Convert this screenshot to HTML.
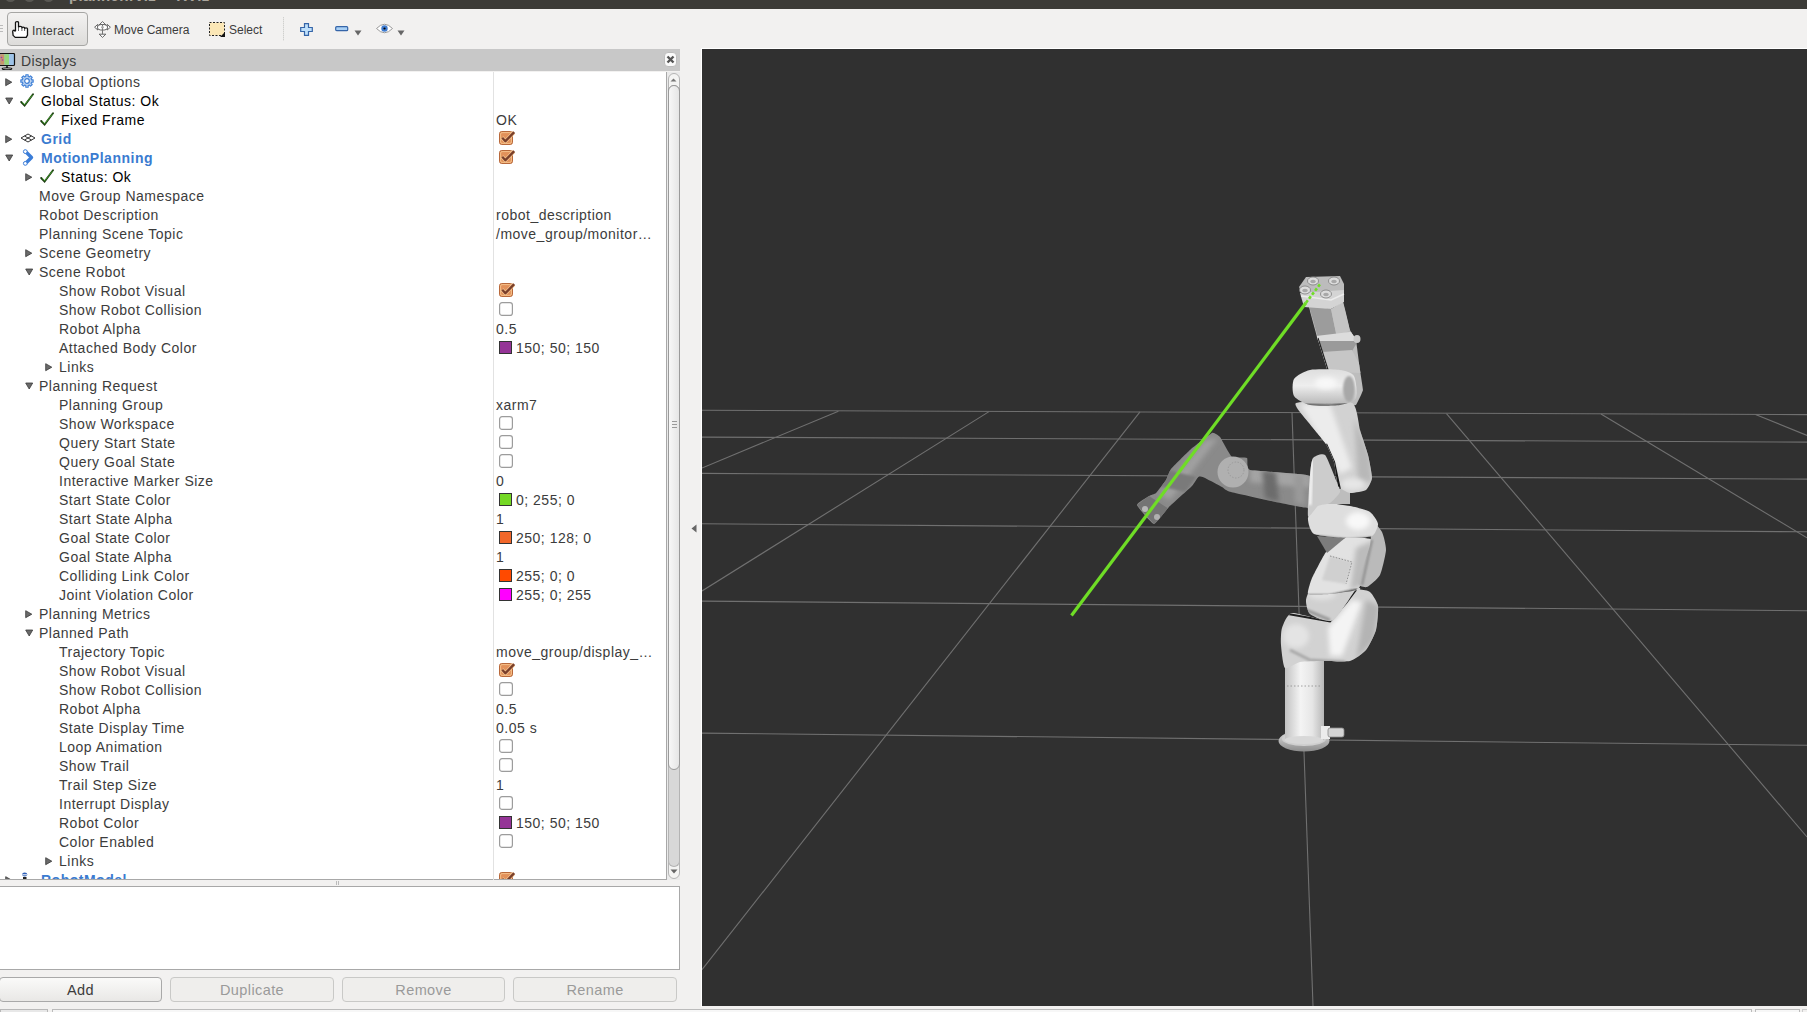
<!DOCTYPE html>
<html><head><meta charset="utf-8"><style>
*{margin:0;padding:0;box-sizing:border-box}
html,body{width:1807px;height:1012px;overflow:hidden;background:#f2f1f0;font-family:"Liberation Sans",sans-serif;position:relative}
.abs{position:absolute}
#title{position:absolute;left:0;top:0;width:1807px;height:9px;background:#3c3b37;overflow:hidden}
#toolbar{position:absolute;left:0;top:9px;width:1807px;height:40px;background:#f2f1f0}
.tb{position:absolute;font-size:12px;color:#3c3c3c;line-height:14px;white-space:nowrap}
#hdr{position:absolute;left:0;top:49px;width:680px;height:22px;background:#c8c8c8}
#tree{position:absolute;left:0;top:72px;width:666px;height:808px;background:#fff;overflow:hidden;border-bottom:1px solid #a8a8a8}
.t{position:absolute;font-size:14px;letter-spacing:0.5px;line-height:19px;height:19px;color:#3c3c3c;white-space:nowrap;padding-top:1px}
.k{color:#000}
.b{color:#3a7bd0;font-weight:bold}
.ar,.ic,.cb{position:absolute}
.sw{position:absolute;width:13px;height:13px;border:1px solid #333}
.vp{position:absolute;left:702px;top:49px}
.btn{position:absolute;top:977px;height:25px;border:1px solid #a9a9a9;border-radius:4px;background:linear-gradient(#fafaf9,#e9e8e6);font-size:14.5px;letter-spacing:0.4px;text-align:center;line-height:24px;color:#3c3c3c}
.btn.dis{color:#9a9a9a;border-color:#c9c9c7;background:#efeeec}
</style></head>
<body>
<div id="title">
 <div class="abs" style="left:5px;top:-9px;width:11px;height:11px;border-radius:50%;background:#5a5954"></div>
 <div class="abs" style="left:24px;top:-9px;width:11px;height:11px;border-radius:50%;background:#5a5954"></div>
 <div class="abs" style="left:43px;top:-9px;width:11px;height:11px;border-radius:50%;background:#5a5954"></div>
 <div class="abs" style="left:69px;top:-12px;font-size:15px;line-height:16px;color:#aaa69d;font-weight:bold;letter-spacing:0.3px">planner.rviz* - RViz</div>
</div>

<div id="toolbar">
 <div class="abs" style="left:0;top:16px;width:3px;height:1px;background:#bbb"></div>
 <div class="abs" style="left:0;top:19px;width:3px;height:1px;background:#bbb"></div>
 <div class="abs" style="left:0;top:22px;width:3px;height:1px;background:#bbb"></div>
 <div class="abs" style="left:7px;top:3px;width:81px;height:34px;border:1px solid #a6a6a4;border-radius:4px;background:linear-gradient(#f3f2f1,#dddcda)"></div>
 <svg class="abs" style="left:12px;top:12px" width="18" height="19"><path d="M3.5 10 V1.6 Q3.5 0.7 5 0.7 Q6.5 0.7 6.5 1.6 V6.2 Q6.5 5.4 8.2 5.4 Q9.9 5.4 9.9 6.3 V7 Q9.9 6.1 11.2 6.1 Q12.6 6.1 12.6 7 V7.7 Q12.6 6.8 14 6.8 Q15.5 6.8 15.5 7.8 V14.2 L14.2 16.4 H3.2 L1.1 14.4 L0.7 10.6 Q0.7 9.2 2.1 9.2 L3.5 10.4" fill="#fff" stroke="#111" stroke-width="1.3" stroke-linejoin="round"/><path d="M6.5 6.5 V10 M9.9 7 V10 M12.6 7.7 V10" stroke="#555" stroke-width="0.9"/></svg>
 <div class="tb" style="left:32px;top:15px;letter-spacing:0.25px">Interact</div>
 <svg class="abs" style="left:94px;top:12px" width="17" height="17"><path d="M8.5 0.6 L5.2 3.8 H11.8Z M8.5 16.4 L5.2 13.2 H11.8Z M0.6 6.2 L3.8 3.4 V9 Z M16.4 6.2 L13.2 3.4 V9Z" fill="#fff" stroke="#555" stroke-width="0.9"/><ellipse cx="8.5" cy="6.3" rx="5" ry="2.8" fill="#fff" stroke="#555" stroke-width="0.9"/><path d="M8.5 3.8 V13.2" stroke="#777" stroke-width="1"/><circle cx="8.5" cy="6.3" r="1.3" fill="#aaa"/></svg>
 <div class="tb" style="left:114px;top:14px">Move Camera</div>
 <svg class="abs" style="left:209px;top:12.5px" width="17" height="15"><rect x="0.5" y="0.5" width="15" height="13" fill="#fbe7b6" stroke="#222" stroke-width="1" stroke-dasharray="2 1.5"/><path d="M16 10 L16 15 L11 15Z" fill="#111"/></svg>
 <div class="tb" style="left:229px;top:14px">Select</div>
 <div class="abs" style="left:283px;top:8px;width:1px;height:24px;background:repeating-linear-gradient(#d0d0ce 0 1px,#e4e4e2 1px 2px)"></div>
 <svg class="abs" style="left:300px;top:14px" width="14" height="14"><path d="M4.5 0.7 H8.5 V4.5 H12.3 V8.5 H8.5 V12.3 H4.5 V8.5 H0.7 V4.5 H4.5Z" fill="#bfe0fb" stroke="#3565a8" stroke-width="1.2"/></svg>
 <svg class="abs" style="left:335px;top:17px" width="14" height="6"><rect x="0.7" y="0.7" width="12" height="4" rx="1" fill="#a9d0f5" stroke="#3565a8" stroke-width="1.2"/></svg>
 <svg class="abs" style="left:354px;top:21px" width="9" height="6"><path d="M0.5 0.5 H7.5 L4 5.5Z" fill="#666"/></svg>
 <svg class="abs" style="left:376px;top:14px" width="17" height="11"><path d="M0.5 5.5 Q8.5 -3 16.5 5.5 Q8.5 14 0.5 5.5Z" fill="#fff" stroke="#999" stroke-width="1"/><circle cx="8.5" cy="5.5" r="3.2" fill="#3f7cd0"/><circle cx="8.5" cy="5.5" r="1.1" fill="#000"/></svg>
 <svg class="abs" style="left:397px;top:21px" width="9" height="6"><path d="M0.5 0.5 H7.5 L4 5.5Z" fill="#666"/></svg>
</div>


<div id="hdr">
 <svg class="abs" style="left:0;top:4px" width="17" height="17"><rect x="-0.5" y="0.5" width="15" height="12" rx="1" fill="#9ec3e8" stroke="#111" stroke-width="1.2"/><rect x="0.2" y="1.2" width="4.3" height="10.6" fill="#c8956a"/><rect x="4.5" y="1.2" width="4.5" height="10.6" fill="#96d67a"/><circle cx="1.5" cy="4.5" r="0.8" fill="#a030c0"/><circle cx="2.5" cy="7" r="0.8" fill="#a030c0"/><path d="M7 13 V15" stroke="#111" stroke-width="1.5"/><ellipse cx="7" cy="15.8" rx="4.8" ry="1" fill="none" stroke="#111" stroke-width="1.1"/></svg>
 <div class="abs" style="left:21px;top:3px;font-size:14px;letter-spacing:0.35px;line-height:18px;color:#3c3c3c">Displays</div>
 <div class="abs" style="left:664px;top:3px;width:13px;height:15px;background:#fafafa;border:1px solid #bdbdbd;border-radius:4px"></div>
 <svg class="abs" style="left:665px;top:5px" width="11" height="11"><path d="M2.5 2.5 L8.5 8.5 M8.5 2.5 L2.5 8.5" stroke="#555" stroke-width="2.4"/></svg>
</div>

<div id="tree">
<div style="position:absolute;left:0;top:-72px;width:666px;height:900px">
<svg class="ar" style="left:5px;top:78px" width="8" height="9"><path d="M0.7 0.7 L6.8 4.2 L0.7 7.7Z" fill="#6a6a6a" stroke="#3a3a3a" stroke-width="0.8" stroke-linejoin="round"/></svg>
<svg class="ic" style="left:20px;top:74px" width="14" height="14"><path d="M11.56 5.86 L13.18 5.80 L13.18 8.20 L11.56 8.14 L11.03 9.42 L12.22 10.52 L10.52 12.22 L9.42 11.03 L8.14 11.56 L8.20 13.18 L5.80 13.18 L5.86 11.56 L4.58 11.03 L3.48 12.22 L1.78 10.52 L2.97 9.42 L2.44 8.14 L0.82 8.20 L0.82 5.80 L2.44 5.86 L2.97 4.58 L1.78 3.48 L3.48 1.78 L4.58 2.97 L5.86 2.44 L5.80 0.82 L8.20 0.82 L8.14 2.44 L9.42 2.97 L10.52 1.78 L12.22 3.48 L11.03 4.58Z" fill="#bcd3f0" stroke="#3d7fd6" stroke-width="1.1" stroke-linejoin="round"/><circle cx="7" cy="7" r="2.3" fill="#fff" stroke="#3d7fd6" stroke-width="1.2"/></svg>
<div class="t" style="left:41px;top:72px">Global Options</div>
<svg class="ar" style="left:5px;top:97px" width="9" height="8"><path d="M0.7 1 L7.7 1 L4.2 7Z" fill="#6a6a6a" stroke="#3a3a3a" stroke-width="0.8" stroke-linejoin="round"/></svg>
<svg class="ic" style="left:20px;top:93px" width="16" height="16"><path d="M1.2 9 L4.6 12.6 L13 1.2" stroke="#1d3a12" stroke-width="1.9" fill="none" stroke-linecap="round"/><path d="M2 9.2 L4.7 11.8 L12.6 1.8" stroke="#46b030" stroke-width="0.8" fill="none"/></svg>
<div class="t k" style="left:41px;top:91px">Global Status: Ok</div>
<svg class="ic" style="left:40px;top:112px" width="16" height="16"><path d="M1.2 9 L4.6 12.6 L13 1.2" stroke="#1d3a12" stroke-width="1.9" fill="none" stroke-linecap="round"/><path d="M2 9.2 L4.7 11.8 L12.6 1.8" stroke="#46b030" stroke-width="0.8" fill="none"/></svg>
<div class="t k" style="left:61px;top:110px">Fixed Frame</div>
<div class="t" style="left:496px;top:110px">OK</div>
<svg class="ar" style="left:5px;top:135px" width="8" height="9"><path d="M0.7 0.7 L6.8 4.2 L0.7 7.7Z" fill="#6a6a6a" stroke="#3a3a3a" stroke-width="0.8" stroke-linejoin="round"/></svg>
<svg class="ic" style="left:20px;top:133px" width="16" height="10"><path d="M1 5 L8 1 L15 5 L8 9Z M4.5 3 L11.5 7 M11.5 3 L4.5 7" stroke="#333" stroke-width="1" fill="none"/></svg>
<div class="t b" style="left:41px;top:129px">Grid</div>
<svg class="cb" style="left:499px;top:131px" width="17" height="15"><rect x="0.5" y="0.5" width="13" height="13" rx="2.2" fill="#e2915a" stroke="#b8683a" stroke-width="1"/><rect x="1.6" y="1.6" width="10.8" height="10.8" rx="1.5" fill="none" stroke="#f6c58e" stroke-width="0.9"/><path d="M3 6.6 L6.4 10.2 L14.8 1.4" stroke="#f7c893" stroke-width="3.8" fill="none" stroke-linejoin="round"/><path d="M3.2 6.8 L6.4 10.2 L15.2 1.2" stroke="#7a3f2a" stroke-width="2.4" fill="none" stroke-linejoin="round"/></svg>
<svg class="ar" style="left:5px;top:154px" width="9" height="8"><path d="M0.7 1 L7.7 1 L4.2 7Z" fill="#6a6a6a" stroke="#3a3a3a" stroke-width="0.8" stroke-linejoin="round"/></svg>
<svg class="ic" style="left:20px;top:149px" width="14" height="17"><path d="M5.5 2.5 L11.5 8.5 L5.5 14.5" stroke="#3b7dd8" stroke-width="3.4" fill="none" stroke-linejoin="round"/><circle cx="5.3" cy="2.6" r="1.9" fill="#fff" stroke="#3b7dd8" stroke-width="1"/><circle cx="5.3" cy="14.4" r="1.9" fill="#fff" stroke="#3b7dd8" stroke-width="1"/></svg>
<div class="t b" style="left:41px;top:148px">MotionPlanning</div>
<svg class="cb" style="left:499px;top:150px" width="17" height="15"><rect x="0.5" y="0.5" width="13" height="13" rx="2.2" fill="#e2915a" stroke="#b8683a" stroke-width="1"/><rect x="1.6" y="1.6" width="10.8" height="10.8" rx="1.5" fill="none" stroke="#f6c58e" stroke-width="0.9"/><path d="M3 6.6 L6.4 10.2 L14.8 1.4" stroke="#f7c893" stroke-width="3.8" fill="none" stroke-linejoin="round"/><path d="M3.2 6.8 L6.4 10.2 L15.2 1.2" stroke="#7a3f2a" stroke-width="2.4" fill="none" stroke-linejoin="round"/></svg>
<svg class="ar" style="left:25px;top:173px" width="8" height="9"><path d="M0.7 0.7 L6.8 4.2 L0.7 7.7Z" fill="#6a6a6a" stroke="#3a3a3a" stroke-width="0.8" stroke-linejoin="round"/></svg>
<svg class="ic" style="left:40px;top:169px" width="16" height="16"><path d="M1.2 9 L4.6 12.6 L13 1.2" stroke="#1d3a12" stroke-width="1.9" fill="none" stroke-linecap="round"/><path d="M2 9.2 L4.7 11.8 L12.6 1.8" stroke="#46b030" stroke-width="0.8" fill="none"/></svg>
<div class="t k" style="left:61px;top:167px">Status: Ok</div>
<div class="t" style="left:39px;top:186px">Move Group Namespace</div>
<div class="t" style="left:39px;top:205px">Robot Description</div>
<div class="t" style="left:496px;top:205px">robot_description</div>
<div class="t" style="left:39px;top:224px">Planning Scene Topic</div>
<div class="t" style="left:496px;top:224px">/move_group/monitor…</div>
<svg class="ar" style="left:25px;top:249px" width="8" height="9"><path d="M0.7 0.7 L6.8 4.2 L0.7 7.7Z" fill="#6a6a6a" stroke="#3a3a3a" stroke-width="0.8" stroke-linejoin="round"/></svg>
<div class="t" style="left:39px;top:243px">Scene Geometry</div>
<svg class="ar" style="left:25px;top:268px" width="9" height="8"><path d="M0.7 1 L7.7 1 L4.2 7Z" fill="#6a6a6a" stroke="#3a3a3a" stroke-width="0.8" stroke-linejoin="round"/></svg>
<div class="t" style="left:39px;top:262px">Scene Robot</div>
<div class="t" style="left:59px;top:281px">Show Robot Visual</div>
<svg class="cb" style="left:499px;top:283px" width="17" height="15"><rect x="0.5" y="0.5" width="13" height="13" rx="2.2" fill="#e2915a" stroke="#b8683a" stroke-width="1"/><rect x="1.6" y="1.6" width="10.8" height="10.8" rx="1.5" fill="none" stroke="#f6c58e" stroke-width="0.9"/><path d="M3 6.6 L6.4 10.2 L14.8 1.4" stroke="#f7c893" stroke-width="3.8" fill="none" stroke-linejoin="round"/><path d="M3.2 6.8 L6.4 10.2 L15.2 1.2" stroke="#7a3f2a" stroke-width="2.4" fill="none" stroke-linejoin="round"/></svg>
<div class="t" style="left:59px;top:300px">Show Robot Collision</div>
<svg class="cb" style="left:499px;top:302px" width="15" height="15"><rect x="0.6" y="0.6" width="12.8" height="12.8" rx="2.5" fill="#fff" stroke="#9c9c9c" stroke-width="1.2"/></svg>
<div class="t" style="left:59px;top:319px">Robot Alpha</div>
<div class="t" style="left:496px;top:319px">0.5</div>
<div class="t" style="left:59px;top:338px">Attached Body Color</div>
<div class="sw" style="left:499px;top:341px;background:#953497"></div>
<div class="t" style="left:516px;top:338px">150; 50; 150</div>
<svg class="ar" style="left:45px;top:363px" width="8" height="9"><path d="M0.7 0.7 L6.8 4.2 L0.7 7.7Z" fill="#6a6a6a" stroke="#3a3a3a" stroke-width="0.8" stroke-linejoin="round"/></svg>
<div class="t" style="left:59px;top:357px">Links</div>
<svg class="ar" style="left:25px;top:382px" width="9" height="8"><path d="M0.7 1 L7.7 1 L4.2 7Z" fill="#6a6a6a" stroke="#3a3a3a" stroke-width="0.8" stroke-linejoin="round"/></svg>
<div class="t" style="left:39px;top:376px">Planning Request</div>
<div class="t" style="left:59px;top:395px">Planning Group</div>
<div class="t" style="left:496px;top:395px">xarm7</div>
<div class="t" style="left:59px;top:414px">Show Workspace</div>
<svg class="cb" style="left:499px;top:416px" width="15" height="15"><rect x="0.6" y="0.6" width="12.8" height="12.8" rx="2.5" fill="#fff" stroke="#9c9c9c" stroke-width="1.2"/></svg>
<div class="t" style="left:59px;top:433px">Query Start State</div>
<svg class="cb" style="left:499px;top:435px" width="15" height="15"><rect x="0.6" y="0.6" width="12.8" height="12.8" rx="2.5" fill="#fff" stroke="#9c9c9c" stroke-width="1.2"/></svg>
<div class="t" style="left:59px;top:452px">Query Goal State</div>
<svg class="cb" style="left:499px;top:454px" width="15" height="15"><rect x="0.6" y="0.6" width="12.8" height="12.8" rx="2.5" fill="#fff" stroke="#9c9c9c" stroke-width="1.2"/></svg>
<div class="t" style="left:59px;top:471px">Interactive Marker Size</div>
<div class="t" style="left:496px;top:471px">0</div>
<div class="t" style="left:59px;top:490px">Start State Color</div>
<div class="sw" style="left:499px;top:493px;background:#74d824"></div>
<div class="t" style="left:516px;top:490px">0; 255; 0</div>
<div class="t" style="left:59px;top:509px">Start State Alpha</div>
<div class="t" style="left:496px;top:509px">1</div>
<div class="t" style="left:59px;top:528px">Goal State Color</div>
<div class="sw" style="left:499px;top:531px;background:#f2672a"></div>
<div class="t" style="left:516px;top:528px">250; 128; 0</div>
<div class="t" style="left:59px;top:547px">Goal State Alpha</div>
<div class="t" style="left:496px;top:547px">1</div>
<div class="t" style="left:59px;top:566px">Colliding Link Color</div>
<div class="sw" style="left:499px;top:569px;background:#ff4a00"></div>
<div class="t" style="left:516px;top:566px">255; 0; 0</div>
<div class="t" style="left:59px;top:585px">Joint Violation Color</div>
<div class="sw" style="left:499px;top:588px;background:#ff00ff"></div>
<div class="t" style="left:516px;top:585px">255; 0; 255</div>
<svg class="ar" style="left:25px;top:610px" width="8" height="9"><path d="M0.7 0.7 L6.8 4.2 L0.7 7.7Z" fill="#6a6a6a" stroke="#3a3a3a" stroke-width="0.8" stroke-linejoin="round"/></svg>
<div class="t" style="left:39px;top:604px">Planning Metrics</div>
<svg class="ar" style="left:25px;top:629px" width="9" height="8"><path d="M0.7 1 L7.7 1 L4.2 7Z" fill="#6a6a6a" stroke="#3a3a3a" stroke-width="0.8" stroke-linejoin="round"/></svg>
<div class="t" style="left:39px;top:623px">Planned Path</div>
<div class="t" style="left:59px;top:642px">Trajectory Topic</div>
<div class="t" style="left:496px;top:642px">move_group/display_…</div>
<div class="t" style="left:59px;top:661px">Show Robot Visual</div>
<svg class="cb" style="left:499px;top:663px" width="17" height="15"><rect x="0.5" y="0.5" width="13" height="13" rx="2.2" fill="#e2915a" stroke="#b8683a" stroke-width="1"/><rect x="1.6" y="1.6" width="10.8" height="10.8" rx="1.5" fill="none" stroke="#f6c58e" stroke-width="0.9"/><path d="M3 6.6 L6.4 10.2 L14.8 1.4" stroke="#f7c893" stroke-width="3.8" fill="none" stroke-linejoin="round"/><path d="M3.2 6.8 L6.4 10.2 L15.2 1.2" stroke="#7a3f2a" stroke-width="2.4" fill="none" stroke-linejoin="round"/></svg>
<div class="t" style="left:59px;top:680px">Show Robot Collision</div>
<svg class="cb" style="left:499px;top:682px" width="15" height="15"><rect x="0.6" y="0.6" width="12.8" height="12.8" rx="2.5" fill="#fff" stroke="#9c9c9c" stroke-width="1.2"/></svg>
<div class="t" style="left:59px;top:699px">Robot Alpha</div>
<div class="t" style="left:496px;top:699px">0.5</div>
<div class="t" style="left:59px;top:718px">State Display Time</div>
<div class="t" style="left:496px;top:718px">0.05 s</div>
<div class="t" style="left:59px;top:737px">Loop Animation</div>
<svg class="cb" style="left:499px;top:739px" width="15" height="15"><rect x="0.6" y="0.6" width="12.8" height="12.8" rx="2.5" fill="#fff" stroke="#9c9c9c" stroke-width="1.2"/></svg>
<div class="t" style="left:59px;top:756px">Show Trail</div>
<svg class="cb" style="left:499px;top:758px" width="15" height="15"><rect x="0.6" y="0.6" width="12.8" height="12.8" rx="2.5" fill="#fff" stroke="#9c9c9c" stroke-width="1.2"/></svg>
<div class="t" style="left:59px;top:775px">Trail Step Size</div>
<div class="t" style="left:496px;top:775px">1</div>
<div class="t" style="left:59px;top:794px">Interrupt Display</div>
<svg class="cb" style="left:499px;top:796px" width="15" height="15"><rect x="0.6" y="0.6" width="12.8" height="12.8" rx="2.5" fill="#fff" stroke="#9c9c9c" stroke-width="1.2"/></svg>
<div class="t" style="left:59px;top:813px">Robot Color</div>
<div class="sw" style="left:499px;top:816px;background:#953497"></div>
<div class="t" style="left:516px;top:813px">150; 50; 150</div>
<div class="t" style="left:59px;top:832px">Color Enabled</div>
<svg class="cb" style="left:499px;top:834px" width="15" height="15"><rect x="0.6" y="0.6" width="12.8" height="12.8" rx="2.5" fill="#fff" stroke="#9c9c9c" stroke-width="1.2"/></svg>
<svg class="ar" style="left:45px;top:857px" width="8" height="9"><path d="M0.7 0.7 L6.8 4.2 L0.7 7.7Z" fill="#6a6a6a" stroke="#3a3a3a" stroke-width="0.8" stroke-linejoin="round"/></svg>
<div class="t" style="left:59px;top:851px">Links</div>
<svg class="ar" style="left:5px;top:876px" width="8" height="9"><path d="M0.7 0.7 L6.8 4.2 L0.7 7.7Z" fill="#6a6a6a" stroke="#3a3a3a" stroke-width="0.8" stroke-linejoin="round"/></svg>
<svg class="ic" style="left:20px;top:871px" width="14" height="17"><ellipse cx="4.7" cy="3.6" rx="2.6" ry="2" fill="#2d5fb8"/><rect x="2.3" y="3.3" width="5" height="1" fill="#fff"/><rect x="3" y="6" width="3.5" height="3" fill="#222"/><rect x="2" y="9" width="5.5" height="6" fill="#fff" stroke="#333" stroke-width="0.8"/></svg>
<div class="t b" style="left:41px;top:870px">RobotModel</div>
<svg class="cb" style="left:499px;top:872px" width="17" height="15"><rect x="0.5" y="0.5" width="13" height="13" rx="2.2" fill="#e2915a" stroke="#b8683a" stroke-width="1"/><rect x="1.6" y="1.6" width="10.8" height="10.8" rx="1.5" fill="none" stroke="#f6c58e" stroke-width="0.9"/><path d="M3 6.6 L6.4 10.2 L14.8 1.4" stroke="#f7c893" stroke-width="3.8" fill="none" stroke-linejoin="round"/><path d="M3.2 6.8 L6.4 10.2 L15.2 1.2" stroke="#7a3f2a" stroke-width="2.4" fill="none" stroke-linejoin="round"/></svg>
</div>
</div>

<div class="abs" style="left:666px;top:72px;width:14px;height:808px;background:#eaeaea;border-left:1px solid #a8a8a8"></div>
<div class="abs" style="left:668px;top:73px;width:12px;height:806px;border:1px solid #b4b4b4;border-radius:6px;background:#f4f4f3"></div>
<div class="abs" style="left:668px;top:85px;width:12px;height:685px;border:1px solid #9b9b9b;border-radius:6px;background:linear-gradient(90deg,#f7f7f7,#e6e6e6)"></div>
<div class="abs" style="left:668px;top:760px;width:12px;height:107px;background:#d8d8d8;border:1px solid #b4b4b4;border-top:none;border-radius:0 0 6px 6px"></div>
<div class="abs" style="left:668px;top:85px;width:12px;height:685px;border:1px solid #9b9b9b;border-radius:6px;background:linear-gradient(90deg,#f7f7f7,#e6e6e6)"></div>
<div class="abs" style="left:672px;top:421px;width:5px;height:1px;background:#9a9a9a"></div><div class="abs" style="left:672px;top:424px;width:5px;height:1px;background:#9a9a9a"></div><div class="abs" style="left:672px;top:427px;width:5px;height:1px;background:#9a9a9a"></div>
<svg class="abs" style="left:670px;top:78px" width="7" height="4"><path d="M0.5 3.5 L3.5 0.5 L6.5 3.5Z" fill="#777"/></svg>
<svg class="abs" style="left:670px;top:869px" width="8" height="5"><path d="M0.5 0.5 L7.5 0.5 L4 4.5Z" fill="#666"/></svg>
<div class="abs" style="left:493px;top:72px;width:1px;height:808px;background:#e2e2e2"></div>


<div class="abs" style="left:336px;top:881px;width:1px;height:4px;background:#bbb"></div>
<div class="abs" style="left:338px;top:881px;width:1px;height:4px;background:#bbb"></div>
<div class="abs" style="left:0;top:886px;width:680px;height:84px;background:#fff;border:1px solid #a8a8a8;border-left:none"></div>
<div class="btn" style="left:-1px;width:163px">Add</div>
<div class="btn dis" style="left:170px;width:164px">Duplicate</div>
<div class="btn dis" style="left:342px;width:163px">Remove</div>
<div class="btn dis" style="left:513px;width:164px">Rename</div>
<svg class="abs" style="left:691px;top:524px" width="7" height="9"><path d="M5.5 0.5 L0.5 4.5 L5.5 8.5Z" fill="#666"/></svg>
<div class="abs" style="left:0;top:1009px;width:48px;height:3px;border:1px solid #b8b8b8;border-bottom:none;background:#e8e8e8"></div>
<div class="abs" style="left:52px;top:1009px;width:1700px;height:3px;border:1px solid #bbb;border-bottom:none;background:#f7f7f7"></div>
<div class="abs" style="left:1755px;top:1009px;width:45px;height:3px;border:1px solid #bbb;border-bottom:none;background:#f7f7f7"></div>
<div class="abs" style="left:1802px;top:1009px;width:5px;height:3px;border:1px solid #ccc;border-bottom:none;border-right:none"></div>

<div class="abs" style="left:701px;top:48px;width:1106px;height:1px;background:#fff"></div><div class="abs" style="left:701px;top:48px;width:1px;height:959px;background:#fff"></div>
<svg class="vp" width="1105" height="957" viewBox="0 0 1105 957"><rect width="1105" height="957" fill="#303030"/><g stroke="#707070" stroke-width="1.1" fill="none"><line x1="0" y1="361.2" x2="1105" y2="365.6"/><line x1="0" y1="388.1" x2="1105" y2="393.1"/><line x1="0" y1="424.4" x2="1105" y2="430.1"/><line x1="0" y1="474.79999999999995" x2="1105" y2="482.79999999999995"/><line x1="0" y1="552.1" x2="1105" y2="561.8"/><line x1="0" y1="684.1" x2="1105" y2="696.3"/><line x1="0" y1="419" x2="136.39999999999998" y2="362.2"/><line x1="0" y1="542" x2="287" y2="362.6"/><line x1="0" y1="920.7" x2="438" y2="362.8"/><line x1="590" y1="364" x2="611" y2="957"/><line x1="744.5" y1="364.6" x2="1105" y2="788"/><line x1="899" y1="365" x2="1105" y2="488.9"/><line x1="1053.5" y1="365.4" x2="1105" y2="386.4"/></g><g><defs>
<clipPath id="gc"><path d="M510.0 384.0 C512.0 383.1 517.2 387.3 518.0 388.0 C518.8 388.7 521.2 393.7 522.0 395.0 C522.8 396.3 528.5 407.1 530.0 408.0 C531.5 408.9 543.8 408.1 545.0 409.0 C546.2 409.9 543.8 419.8 548.0 421.0 C552.2 422.2 604.0 424.5 608.0 427.0 C612.0 429.5 613.3 457.9 608.0 459.0 C602.7 460.1 534.9 444.4 529.0 443.0 C523.1 441.6 522.1 439.1 520.0 438.0 C517.9 436.9 500.0 427.1 498.0 427.0 C496.0 426.9 492.1 434.9 490.0 437.0 C487.9 439.1 469.5 455.5 467.0 458.0 C464.5 460.5 454.1 475.1 452.0 475.0 C449.9 474.9 435.3 457.9 435.0 456.0 C434.7 454.1 445.7 447.8 447.0 447.0 C448.3 446.2 452.9 445.1 454.0 444.0 C455.1 442.9 463.0 432.6 464.0 431.0 C465.0 429.4 467.4 422.0 469.0 420.0 C470.6 418.0 485.3 403.4 488.0 401.0 C490.7 398.6 508.0 384.9 510.0 384.0Z"/></clipPath>
<filter id="bl" x="-30%" y="-30%" width="160%" height="160%"><feGaussianBlur stdDeviation="2.5"/></filter>
<filter id="bl1" x="-30%" y="-30%" width="160%" height="160%"><feGaussianBlur stdDeviation="0.9"/></filter>
<linearGradient id="colg" x1="0" x2="1" y1="0" y2="0"><stop offset="0" stop-color="#c2c2c2"/><stop offset="0.4" stop-color="#f4f4f4"/><stop offset="0.7" stop-color="#e6e6e6"/><stop offset="1" stop-color="#b8b8b8"/></linearGradient>
<linearGradient id="pillg" x1="0" x2="0" y1="0" y2="1"><stop offset="0" stop-color="#dedede"/><stop offset="0.45" stop-color="#eeeeee"/><stop offset="1" stop-color="#b4b4b4"/></linearGradient>
<linearGradient id="flg" x1="0" x2="0" y1="0" y2="1"><stop offset="0" stop-color="#e0e0e0"/><stop offset="1" stop-color="#8c8c8c"/></linearGradient>
<clipPath id="c0"><path d="M604.0 551.0 C604.3 548.2 608.1 538.7 611.0 537.0 C613.9 535.3 628.3 533.8 633.0 534.0 C637.7 534.2 656.3 537.3 658.0 539.0 C659.7 540.7 652.8 547.6 650.0 551.0 C647.2 554.4 634.2 571.6 630.0 573.0 C625.8 574.4 610.6 567.2 608.0 565.0 C605.4 562.8 603.7 553.8 604.0 551.0Z"/></clipPath><clipPath id="c1"><path d="M579.0 596.0 C578.7 592.0 578.9 582.2 580.0 579.0 C581.1 575.8 585.1 564.7 590.0 564.0 C594.9 563.3 623.6 572.9 629.0 572.0 C634.4 571.1 641.5 558.1 644.0 555.0 C646.5 551.9 651.6 542.2 654.0 541.0 C656.4 539.8 665.8 541.4 668.0 543.0 C670.2 544.6 675.4 553.2 676.0 557.0 C676.6 560.8 675.2 576.6 674.0 581.0 C672.8 585.4 666.6 597.9 664.0 601.0 C661.4 604.1 652.4 610.9 648.0 612.0 C643.6 613.1 625.0 611.9 620.0 612.0 C615.0 612.1 601.7 612.3 598.0 613.0 C594.3 613.7 584.9 620.7 583.0 619.0 C581.1 617.3 579.3 600.0 579.0 596.0Z"/></clipPath><clipPath id="c2"><path d="M624.0 503.0 C626.2 500.3 639.9 489.8 643.0 489.0 C646.1 488.2 668.5 488.5 670.0 491.0 C671.5 493.5 667.1 522.7 666.0 526.0 C664.9 529.3 656.5 539.7 654.0 541.0 C651.5 542.3 631.2 544.7 628.0 545.0 C624.8 545.3 607.2 546.1 606.0 545.0 C604.8 543.9 608.8 531.8 610.0 529.0 C611.2 526.2 621.8 505.7 624.0 503.0Z"/></clipPath><clipPath id="c3"><path d="M670.0 473.0 C671.2 471.7 678.6 480.2 680.0 483.0 C681.4 485.8 684.2 496.7 684.0 501.0 C683.8 505.3 679.9 522.3 678.0 526.0 C676.1 529.7 667.2 537.3 665.0 538.0 C662.8 538.7 655.7 537.2 656.0 533.0 C656.3 528.8 666.6 502.0 668.0 496.0 C669.4 490.0 668.8 474.3 670.0 473.0Z"/></clipPath><clipPath id="c4"><path d="M606.0 469.0 C606.4 465.9 611.8 455.2 616.0 454.0 C620.2 452.8 642.8 456.1 648.0 457.0 C653.2 457.9 665.2 461.2 668.0 463.0 C670.8 464.8 675.8 472.6 676.0 475.0 C676.2 477.4 673.0 485.6 670.0 487.0 C667.0 488.4 651.8 489.2 646.0 489.0 C640.2 488.8 616.0 487.0 612.0 485.0 C608.0 483.0 605.6 472.1 606.0 469.0Z"/></clipPath><clipPath id="c5"><path d="M608.0 426.0 C608.5 420.2 609.5 411.0 611.0 409.0 C612.5 407.0 620.7 403.8 623.0 406.0 C625.3 408.2 632.5 427.3 634.0 431.0 C635.5 434.7 638.6 440.7 638.0 443.0 C637.4 445.3 630.2 452.6 628.0 454.0 C625.8 455.4 618.2 455.7 616.0 457.0 C613.8 458.3 606.8 470.1 606.0 467.0 C605.2 463.9 607.5 431.8 608.0 426.0Z"/></clipPath><clipPath id="c6"><path d="M607.0 257.0 C607.4 256.0 627.9 260.1 629.0 260.0 C630.1 259.9 640.4 252.3 641.0 253.0 C641.6 253.7 647.6 279.7 648.0 281.0 C648.4 282.3 653.7 289.7 654.0 291.0 C654.3 292.3 657.8 319.3 658.0 321.0 C658.2 322.7 661.1 339.8 661.0 341.0 C660.9 342.2 654.8 355.5 654.0 356.0 C653.2 356.5 638.9 357.1 638.0 356.0 C637.1 354.9 626.7 325.2 626.0 323.0 C625.3 320.8 616.6 293.2 616.0 291.0 C615.4 288.8 606.6 258.0 607.0 257.0Z"/></clipPath><clipPath id="c7"><path d="M594.0 354.0 C597.6 352.3 644.7 351.8 650.0 354.0 C655.3 356.2 656.7 376.7 658.0 381.0 C659.3 385.3 665.0 402.0 666.0 406.0 C667.0 410.0 670.2 426.1 670.0 429.0 C669.8 431.9 665.8 439.8 664.0 441.0 C662.2 442.2 650.3 444.3 648.0 444.0 C645.7 443.7 637.3 439.6 636.0 437.0 C634.7 434.4 633.0 416.5 632.0 413.0 C631.0 409.5 626.1 398.2 624.0 395.0 C621.9 391.8 609.5 377.4 607.0 374.0 C604.5 370.6 590.4 355.7 594.0 354.0Z"/></clipPath><clipPath id="c8"><path d="M608.0 321.0 C613.4 319.9 632.9 320.3 638.0 321.0 C643.1 321.7 650.1 323.7 652.0 327.0 C653.9 330.3 655.6 345.6 654.0 349.0 C652.4 352.4 643.4 355.2 638.0 356.0 C632.6 356.8 613.4 357.1 608.0 356.0 C602.6 354.9 593.9 350.0 592.0 347.0 C590.1 344.0 590.1 333.0 592.0 330.0 C593.9 327.0 602.6 322.1 608.0 321.0Z"/></clipPath></defs><path d="M510.0 384.0 C512.0 383.1 517.2 387.3 518.0 388.0 C518.8 388.7 521.2 393.7 522.0 395.0 C522.8 396.3 528.5 407.1 530.0 408.0 C531.5 408.9 543.8 408.1 545.0 409.0 C546.2 409.9 543.8 419.8 548.0 421.0 C552.2 422.2 604.0 424.5 608.0 427.0 C612.0 429.5 613.3 457.9 608.0 459.0 C602.7 460.1 534.9 444.4 529.0 443.0 C523.1 441.6 522.1 439.1 520.0 438.0 C517.9 436.9 500.0 427.1 498.0 427.0 C496.0 426.9 492.1 434.9 490.0 437.0 C487.9 439.1 469.5 455.5 467.0 458.0 C464.5 460.5 454.1 475.1 452.0 475.0 C449.9 474.9 435.3 457.9 435.0 456.0 C434.7 454.1 445.7 447.8 447.0 447.0 C448.3 446.2 452.9 445.1 454.0 444.0 C455.1 442.9 463.0 432.6 464.0 431.0 C465.0 429.4 467.4 422.0 469.0 420.0 C470.6 418.0 485.3 403.4 488.0 401.0 C490.7 398.6 508.0 384.9 510.0 384.0Z" fill="#8a8a8a" /><g clip-path="url(#gc)"><path d="M548.0 417.0 L608.0 425.0 L608.0 439.0 L548.0 433.0Z" fill="#a4a4a4" filter="url(#bl)"/><path d="M560.0 421.0 L574.0 423.0 L577.0 453.0 L563.0 449.0Z" fill="#6c6c6c" filter="url(#bl)"/><path d="M592.0 425.0 L602.0 426.0 L603.0 456.0 L593.0 454.0Z" fill="#9a9a9a" filter="url(#bl)"/><path d="M503.0 391.0 L516.0 389.0 L468.0 451.0 L458.0 446.0Z" fill="#a0a0a0" filter="url(#bl)"/><path d="M466.0 421.0 L494.0 428.0 L483.0 443.0 L456.0 437.0Z" fill="#7a7a7a" filter="url(#bl1)"/><path d="M435.0 456.0 L447.0 447.0 L467.0 460.0 L452.0 475.0Z" fill="#747474" /><ellipse cx="443.0" cy="460.0" rx="3" ry="3" fill="#b8b8b8" /><ellipse cx="455.0" cy="468.0" rx="3" ry="3" fill="#b0b0b0" /></g><ellipse cx="531.0" cy="423.0" rx="15.5" ry="15.5" fill="#b0b0b0" /><circle cx="534" cy="421" r="8" fill="none" stroke="#949494" stroke-width="0.8" stroke-dasharray="1.5 1.5"/><ellipse cx="602.0" cy="692.0" rx="25.5" ry="10.5" fill="url(#flg)" /><ellipse cx="602.0" cy="690.0" rx="22" ry="7" fill="#cfcfcf" /><rect x="583" y="601" width="39" height="90" fill="url(#colg)"/><path d="M585.0 637.0 L620.0 637.0" stroke="#8a8a8a" stroke-width="0.8" stroke-dasharray="1.5 2"/><ellipse cx="602.0" cy="691.0" rx="19.5" ry="4" fill="#d8d8d8" /><rect x="619" y="677" width="9" height="13" fill="#ececec"/><rect x="626" y="679" width="16" height="9" rx="2" fill="#d4d4d4" stroke="#8c8c8c" stroke-width="0.8"/><path d="M604.0 551.0 C604.3 548.2 608.1 538.7 611.0 537.0 C613.9 535.3 628.3 533.8 633.0 534.0 C637.7 534.2 656.3 537.3 658.0 539.0 C659.7 540.7 652.8 547.6 650.0 551.0 C647.2 554.4 634.2 571.6 630.0 573.0 C625.8 574.4 610.6 567.2 608.0 565.0 C605.4 562.8 603.7 553.8 604.0 551.0Z" fill="#d0d0d0"/><g clip-path="url(#c0)"><ellipse cx="620.0" cy="545.0" rx="14" ry="6" fill="#e2e2e2" filter="url(#bl)"/><path d="M604.0 561.0 L628.0 571.0" stroke="#9a9a9a" stroke-width="3" fill="none" filter="url(#bl1)"/></g><path d="M579.0 596.0 C578.7 592.0 578.9 582.2 580.0 579.0 C581.1 575.8 585.1 564.7 590.0 564.0 C594.9 563.3 623.6 572.9 629.0 572.0 C634.4 571.1 641.5 558.1 644.0 555.0 C646.5 551.9 651.6 542.2 654.0 541.0 C656.4 539.8 665.8 541.4 668.0 543.0 C670.2 544.6 675.4 553.2 676.0 557.0 C676.6 560.8 675.2 576.6 674.0 581.0 C672.8 585.4 666.6 597.9 664.0 601.0 C661.4 604.1 652.4 610.9 648.0 612.0 C643.6 613.1 625.0 611.9 620.0 612.0 C615.0 612.1 601.7 612.3 598.0 613.0 C594.3 613.7 584.9 620.7 583.0 619.0 C581.1 617.3 579.3 600.0 579.0 596.0Z" fill="#d2d2d2"/><g clip-path="url(#c1)"><ellipse cx="594.0" cy="587.0" rx="13" ry="12" fill="#e4e4e4" filter="url(#bl)"/><path d="M626.0 579.0 L650.0 551.0 L660.0 553.0 L640.0 607.0 L628.0 607.0Z" fill="#f4f4f4" filter="url(#bl)"/><path d="M664.0 551.0 L678.0 557.0 L672.0 591.0 L654.0 611.0Z" fill="#b4b4b4" filter="url(#bl)"/><path d="M588.0 601.0 L608.0 611.0 L643.0 613.0" stroke="#a8a8a8" stroke-width="3" fill="none" filter="url(#bl1)"/><path d="M586.0 565.0 L628.0 572.5 L644.0 554.0 L654.0 541.0" stroke="#1e1e1e" stroke-width="2" fill="none"/></g><path d="M624.0 503.0 C626.2 500.3 639.9 489.8 643.0 489.0 C646.1 488.2 668.5 488.5 670.0 491.0 C671.5 493.5 667.1 522.7 666.0 526.0 C664.9 529.3 656.5 539.7 654.0 541.0 C651.5 542.3 631.2 544.7 628.0 545.0 C624.8 545.3 607.2 546.1 606.0 545.0 C604.8 543.9 608.8 531.8 610.0 529.0 C611.2 526.2 621.8 505.7 624.0 503.0Z" fill="#e2e2e2"/><g clip-path="url(#c2)"><path d="M628.0 507.0 L650.0 513.0 L644.0 535.0 L620.0 531.0Z" fill="#d0d0d0" filter="url(#bl1)"/><path d="M628.0 507.0 L650.0 513.0 L644.0 535.0" stroke="#7a7a7a" stroke-width="0.8" fill="none" stroke-dasharray="1.5 1.5"/><path d="M654.0 499.0 L672.0 491.0 L666.0 535.0 L648.0 541.0Z" fill="#bcbcbc" filter="url(#bl)"/><path d="M604.0 547.0 L628.0 547.0 L656.0 541.0" stroke="#262626" stroke-width="2.5" fill="none" filter="url(#bl1)"/></g><path d="M615.0 487.0 L643.0 489.0 L625.0 504.0Z" fill="#7c7c7c"/><path d="M670.0 473.0 C671.2 471.7 678.6 480.2 680.0 483.0 C681.4 485.8 684.2 496.7 684.0 501.0 C683.8 505.3 679.9 522.3 678.0 526.0 C676.1 529.7 667.2 537.3 665.0 538.0 C662.8 538.7 655.7 537.2 656.0 533.0 C656.3 528.8 666.6 502.0 668.0 496.0 C669.4 490.0 668.8 474.3 670.0 473.0Z" fill="#bababa"/><g clip-path="url(#c3)"><path d="M670.0 491.0 L660.0 536.0" stroke="#8a8a8a" stroke-width="2" filter="url(#bl1)"/></g><path d="M606.0 469.0 C606.4 465.9 611.8 455.2 616.0 454.0 C620.2 452.8 642.8 456.1 648.0 457.0 C653.2 457.9 665.2 461.2 668.0 463.0 C670.8 464.8 675.8 472.6 676.0 475.0 C676.2 477.4 673.0 485.6 670.0 487.0 C667.0 488.4 651.8 489.2 646.0 489.0 C640.2 488.8 616.0 487.0 612.0 485.0 C608.0 483.0 605.6 472.1 606.0 469.0Z" fill="#dedede"/><g clip-path="url(#c4)"><ellipse cx="656.0" cy="472.0" rx="12" ry="9" fill="#f8f8f8" filter="url(#bl)"/><path d="M608.0 459.0 L608.0 481.0" stroke="#f6f6f6" stroke-width="3" filter="url(#bl1)"/><path d="M610.0 487.0 L646.0 491.0 L670.0 489.0" stroke="#9a9a9a" stroke-width="3" fill="none" filter="url(#bl1)"/></g><rect x="626" y="440" width="22" height="15" fill="#bdbdbd"/><path d="M608.0 426.0 C608.5 420.2 609.5 411.0 611.0 409.0 C612.5 407.0 620.7 403.8 623.0 406.0 C625.3 408.2 632.5 427.3 634.0 431.0 C635.5 434.7 638.6 440.7 638.0 443.0 C637.4 445.3 630.2 452.6 628.0 454.0 C625.8 455.4 618.2 455.7 616.0 457.0 C613.8 458.3 606.8 470.1 606.0 467.0 C605.2 463.9 607.5 431.8 608.0 426.0Z" fill="#cccccc"/><g clip-path="url(#c5)"><path d="M610.0 411.0 L608.0 456.0" stroke="#f4f4f4" stroke-width="3" filter="url(#bl1)"/></g><path d="M607.0 257.0 C607.4 256.0 627.9 260.1 629.0 260.0 C630.1 259.9 640.4 252.3 641.0 253.0 C641.6 253.7 647.6 279.7 648.0 281.0 C648.4 282.3 653.7 289.7 654.0 291.0 C654.3 292.3 657.8 319.3 658.0 321.0 C658.2 322.7 661.1 339.8 661.0 341.0 C660.9 342.2 654.8 355.5 654.0 356.0 C653.2 356.5 638.9 357.1 638.0 356.0 C637.1 354.9 626.7 325.2 626.0 323.0 C625.3 320.8 616.6 293.2 616.0 291.0 C615.4 288.8 606.6 258.0 607.0 257.0Z" fill="#bdbdbd"/><g clip-path="url(#c6)"><path d="M607.0 257.0 L629.0 260.0 L635.0 289.0 L616.0 289.0Z" fill="#9c9c9c"/><path d="M629.0 260.0 L641.0 253.0 L648.0 281.0 L635.0 289.0Z" fill="#c4c4c4"/><path d="M614.0 287.0 L656.0 282.0 L658.0 292.0 L616.0 293.0Z" fill="#dcdcdc"/><path d="M616.0 292.0 L656.0 292.0 L650.0 302.0 L620.0 304.0Z" fill="#9a9a9a"/><path d="M620.0 303.0 L650.0 301.0 L662.0 324.0 L626.0 323.0Z" fill="#c6c6c6"/><path d="M616.0 289.0 L627.0 324.0" stroke="#222" stroke-width="1.2"/></g><ellipse cx="655.0" cy="290.0" rx="3.5" ry="4" fill="#c8c8c8" /><path d="M594.0 354.0 C597.6 352.3 644.7 351.8 650.0 354.0 C655.3 356.2 656.7 376.7 658.0 381.0 C659.3 385.3 665.0 402.0 666.0 406.0 C667.0 410.0 670.2 426.1 670.0 429.0 C669.8 431.9 665.8 439.8 664.0 441.0 C662.2 442.2 650.3 444.3 648.0 444.0 C645.7 443.7 637.3 439.6 636.0 437.0 C634.7 434.4 633.0 416.5 632.0 413.0 C631.0 409.5 626.1 398.2 624.0 395.0 C621.9 391.8 609.5 377.4 607.0 374.0 C604.5 370.6 590.4 355.7 594.0 354.0Z" fill="#d2d2d2"/><g clip-path="url(#c7)"><path d="M598.0 355.0 L628.0 355.0 L650.0 419.0 L638.0 425.0Z" fill="#ececec" filter="url(#bl)"/><path d="M652.0 369.0 L668.0 406.0 L670.0 433.0 L656.0 433.0Z" fill="#b8b8b8" filter="url(#bl)"/><ellipse cx="651.0" cy="435.0" rx="12" ry="6" fill="#e6e6e6" filter="url(#bl)"/><path d="M624.0 395.0 L632.0 413.0 L638.0 441.0" stroke="#1a1a1a" stroke-width="2.2" fill="none"/></g><path d="M608.0 321.0 C613.4 319.9 632.9 320.3 638.0 321.0 C643.1 321.7 650.1 323.7 652.0 327.0 C653.9 330.3 655.6 345.6 654.0 349.0 C652.4 352.4 643.4 355.2 638.0 356.0 C632.6 356.8 613.4 357.1 608.0 356.0 C602.6 354.9 593.9 350.0 592.0 347.0 C590.1 344.0 590.1 333.0 592.0 330.0 C593.9 327.0 602.6 322.1 608.0 321.0Z" fill="url(#pillg)"/><g clip-path="url(#c8)"><ellipse cx="647.0" cy="340.0" rx="6" ry="13" fill="#a8a8a8" filter="url(#bl1)"/><ellipse cx="624.0" cy="334.0" rx="11" ry="6" fill="#f8f8f8" filter="url(#bl)"/><path d="M596.0 356.0 L628.0 357.0 L650.0 355.0" stroke="#262626" stroke-width="2" fill="none" filter="url(#bl1)"/></g><path d="M597.0 238.0 L604.0 228.0 L638.0 227.0 L642.0 235.0 L642.0 247.0 L603.0 250.0Z" fill="#bcbcbc"/><path d="M598.0 244.0 L642.0 241.0 L642.0 253.0 L629.0 260.0 L602.0 258.0Z" fill="#d4d4d4"/><path d="M599.0 247.0 L629.0 251.0 L642.0 245.0" stroke="#ececec" stroke-width="1.5" fill="none"/><ellipse cx="611.0" cy="232.0" rx="5.5" ry="4" fill="#dcdcdc" stroke="#7e7e7e" stroke-width="0.8"/><ellipse cx="611.0" cy="232.5" rx="2.8" ry="1.8" fill="#a8a8a8" /><ellipse cx="632.0" cy="232.0" rx="5.5" ry="4" fill="#dcdcdc" stroke="#7e7e7e" stroke-width="0.8"/><ellipse cx="632.0" cy="232.5" rx="2.8" ry="1.8" fill="#a8a8a8" /><ellipse cx="603.0" cy="241.0" rx="5.5" ry="4" fill="#dcdcdc" stroke="#7e7e7e" stroke-width="0.8"/><ellipse cx="603.0" cy="241.5" rx="2.8" ry="1.8" fill="#a8a8a8" /><ellipse cx="624.0" cy="245.0" rx="5.5" ry="4" fill="#dcdcdc" stroke="#7e7e7e" stroke-width="0.8"/><ellipse cx="624.0" cy="245.5" rx="2.8" ry="1.8" fill="#a8a8a8" /><line x1="369.5" y1="566.5" x2="604" y2="253.7" stroke="#6fdd26" stroke-width="3.2"/><line x1="604" y1="253.7" x2="619" y2="234" stroke="#6fdd26" stroke-width="2.6" stroke-dasharray="3 2"/></g></svg>
</body></html>
